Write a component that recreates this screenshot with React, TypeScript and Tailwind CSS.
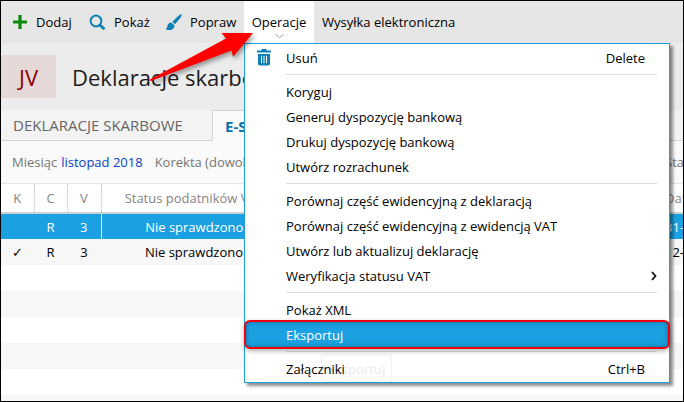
import { Fragment } from "react";

type MenuItem = {
	label: string;
	shortcut?: string;
	icon?: React.ReactNode;
	submenu?: boolean;
	active?: boolean;
};

type Row = {
	check: string;
	c: string;
	v: string;
	status: string;
	date: string;
	selected?: boolean;
};

function PlusIcon() {
	return (
		<svg width="16" height="16" viewBox="0 0 16 16" aria-hidden="true">
			<path d="M6.4 1h3.2v5.4H15v3.2H9.6V15H6.4V9.6H1V6.4h5.4z" fill="#0a8a0a" />
		</svg>
	);
}

function SearchIcon() {
	return (
		<svg width="17" height="17" viewBox="0 0 17 17" fill="none" stroke="#0c7fb5" aria-hidden="true">
			<circle cx="7" cy="7" r="5.4" strokeWidth="2" />
			<path d="M10.9 10.9l4.6 4.4" strokeWidth="2.8" />
		</svg>
	);
}

function BrushIcon() {
	return (
		<svg width="17" height="17" viewBox="0 0 17 17" fill="#0c7fb5" aria-hidden="true">
			<path d="M16.6.4c.5.5-.3 2-1.3 3.5L10 10.2 7.3 7.800 13 2.300C14.600.9 16.100-.1 16.600.4z" />
			<path d="M6.300 8.500l3.100 2.800c.4 2.500-1.700 4.800-4.800 4.800C2.700 16.100 1 15.600.3 14.800c1.500-.1 1.700-1.200 2.100-2.900.5-2 2-3.400 3.900-3.400z" />
		</svg>
	);
}

function TrashIcon() {
	return (
		<svg width="14" height="17" viewBox="0 0 14 17" aria-hidden="true">
			<path d="M4.5 0h5v1.500H14v2H0v-2h4.500z" fill="#0c7fb5" />
			<path d="M1 5h12v9.500a2 2 0 0 1-2 2H3a2 2 0 0 1-2-2z" fill="#0c7fb5" />
			<path d="M4.500 6.800v7.400M7 6.800v7.400M9.500 6.800v7.400" stroke="#fff" />
		</svg>
	);
}

const menuGroups: MenuItem[][] = [
	[{ label: "Usuń", shortcut: "Delete", icon: <TrashIcon /> }],
	[
		{ label: "Koryguj" },
		{ label: "Generuj dyspozycję bankową" },
		{ label: "Drukuj dyspozycję bankową" },
		{ label: "Utwórz rozrachunek" },
	],
	[
		{ label: "Porównaj część ewidencyjną z deklaracją" },
		{ label: "Porównaj część ewidencyjną z ewidencją VAT" },
		{ label: "Utwórz lub aktualizuj deklarację" },
		{ label: "Weryfikacja statusu VAT", submenu: true },
	],
	[{ label: "Pokaż XML" }, { label: "Eksportuj", active: true }],
	[{ label: "Załączniki", shortcut: "Ctrl+B" }],
];

const rows: Row[] = [
	{ check: "", c: "R", v: "3", status: "Nie sprawdzono", date: "31-12-2018", selected: true },
	{ check: "✓", c: "R", v: "3", status: "Nie sprawdzono", date: "12-12-2018" },
	...Array.from({ length: 6 }, () => ({ check: "", c: "", v: "", status: "", date: "" })),
];

function Toolbar() {
	return (
		<div className="flex h-[42px] bg-[#e6e6e6]">
			<button type="button" className="ml-[11px] flex w-[77px] items-center gap-2">
				<PlusIcon />
				Dodaj
			</button>
			<button type="button" className="flex w-[76px] items-center gap-2">
				<SearchIcon />
				Pokaż
			</button>
			<button type="button" className="flex w-[79px] items-center gap-2">
				<BrushIcon />
				Popraw
			</button>
			<div className="relative z-20">
				<button
					type="button"
					aria-haspopup="menu"
					aria-expanded="true"
					className="relative flex h-full w-[70px] items-center justify-center bg-white"
				>
					Operacje
					<svg
						className="absolute bottom-1 left-[31px]"
						width="9"
						height="5"
						viewBox="0 0 9 5"
						fill="none"
						stroke="#a0a0a0"
						aria-hidden="true"
					>
						<path d="M.5.5l4 3 4-3" />
					</svg>
				</button>
				<OperationsMenu />
				<PointerArrow />
			</div>
			<button type="button" className="px-2">
				Wysyłka elektroniczna
			</button>
		</div>
	);
}

function PointerArrow() {
	return (
		<svg
			className="pointer-events-none absolute top-[27px] -left-[100px] drop-shadow-[2px_3px_2px_rgba(0,0,0,0.35)]"
			width="112"
			height="56"
			viewBox="0 0 112 56"
			aria-hidden="true"
		>
			<path d="M5 52L82 10.5 77.5 5 109 5 89 29 87.500 22.500 7 53z" fill="#ff0000" />
		</svg>
	);
}

function OperationsMenu() {
	return (
		<div
			role="menu"
			className="absolute top-full left-0 w-[426px] border border-[#1ba1e2] bg-white py-px shadow-[3px_3px_3px_rgba(0,0,0,0.45)]"
		>
			{/* fading tooltip */}
			<div className="absolute bottom-0 left-[76px] border border-[#f3f3f3] px-1.5 pt-1 pb-0.5 text-[#ece9e9]">
				Eksportuj
			</div>
			{menuGroups.map((group, i) => (
				<Fragment key={group[0].label}>
					{i > 0 && (
						<div className="flex h-[9px] items-center pr-3 pl-[41px]">
							<div className="h-px flex-1 bg-[#dedede]" />
						</div>
					)}
					{group.map((item) => (
						<button
							key={item.label}
							type="button"
							role="menuitem"
							className={`relative flex h-[25px] w-full items-center pr-6 text-left ${
								item.active ? "bg-[#1ba1e2] text-white" : "text-black"
							}`}
						>
							<span className="flex w-[41px] shrink-0 pl-3">{item.icon}</span>
							<span className="flex-1">{item.label}</span>
							{item.shortcut && <span>{item.shortcut}</span>}
							{item.submenu && (
								<svg
									className="-mr-3"
									width="6"
									height="10"
									viewBox="0 0 6 10"
									fill="none"
									stroke="#111"
									strokeWidth="1.8"
									aria-hidden="true"
								>
									<path d="M1 1l3.500 4L1 9" />
								</svg>
							)}
							{item.active && (
								<span className="absolute -inset-x-px -inset-y-0.5 rounded-md border-2 border-[#f0000c] shadow-[0_2px_5px_rgba(0,0,0,0.3),inset_0_0_5px_rgba(0,0,0,0.35)]" />
							)}
						</button>
					))}
				</Fragment>
			))}
		</div>
	);
}

function DeclarationsTable() {
	return (
		<table className="w-full table-fixed border-collapse">
			<colgroup>
				<col className="w-[33px]" />
				<col className="w-[33px]" />
				<col className="w-[34px]" />
				<col className="w-[186px]" />
				<col />
				<col className="w-[22px]" />
			</colgroup>
			<thead>
				<tr className="h-[29px] border-b-2 border-[#d2d2d2] bg-white text-[#858585]">
					<th className="border-r border-dotted border-r-[#c0c0c0] font-normal">K</th>
					<th className="border-r border-dotted border-r-[#c0c0c0] font-normal">C</th>
					<th className="border-r border-dotted border-r-[#c0c0c0] font-normal">V</th>
					<th className="font-normal">Status podatników VAT</th>
					<th />
					<th className="overflow-hidden pl-1 text-left font-normal">Data</th>
				</tr>
			</thead>
			<tbody>
				{rows.map((row, i) => (
					<tr
						key={i}
						className={`h-[26px] text-center whitespace-nowrap ${
							row.selected ? "bg-[#1ba1e2] text-white" : "text-black odd:bg-white even:bg-[#f7f7f7]"
						}`}
					>
						<td>{row.check}</td>
						<td>{row.c}</td>
						<td className={row.selected ? "border-r border-white" : ""}>{row.v}</td>
						<td>{row.status}</td>
						<td />
						<td className="overflow-hidden pl-1 text-left">{row.date}</td>
					</tr>
				))}
			</tbody>
		</table>
	);
}

export default function App() {
	return (
		<div className="h-screen overflow-hidden border border-black bg-white font-['Open_Sans',sans-serif] text-[13px] leading-5 text-black">
			<Toolbar />
			<header className="flex h-[67px] items-center bg-[#ececec]">
				<div className="flex h-[43px] w-[55px] items-center justify-center bg-[#e5d8d8] text-[22px] font-medium text-[#8b0000]">
					JV
				</div>
				<h1 className="ml-4 text-[22px] text-[#1c1c1c]">Deklaracje skarbowe</h1>
			</header>
			<nav className="flex h-[31px] bg-[#f3f3f3] text-[15px]">
				<button
					type="button"
					className="w-[212px] border-r border-b border-[#d4d4d4] pl-3 text-left text-[#666]"
				>
					DEKLARACJE SKARBOWE
				</button>
				<button
					type="button"
					className="border-t border-[#d4d4d4] bg-[#fafafa] px-3 font-bold text-[#0c72ab]"
				>
					E-SPRAWOZDANIA
				</button>
				<div className="flex-1 border-b border-[#d4d4d4]" />
			</nav>
			<div className="flex h-[43px] items-center justify-between border-b border-[#e6e6e6] bg-[#fafafa] pl-[11px] whitespace-nowrap text-[#777]">
				<div className="flex">
					Miesiąc
					<button type="button" className="ml-1 text-[#0a3fc4]">
						listopad 2018
					</button>
					<span className="ml-3">Korekta (dowolna)</span>
				</div>
				<span className="w-[18px] overflow-hidden">Status</span>
			</div>
			<DeclarationsTable />
		</div>
	);
}
